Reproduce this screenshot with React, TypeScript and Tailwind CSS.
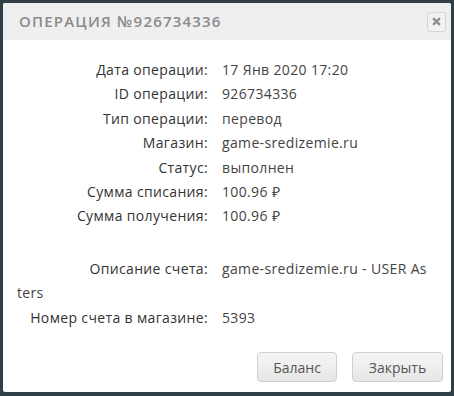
import React from "react";

const rows: [string, string][] = [
  ["Дата операции:", "17 Янв 2020 17:20"],
  ["ID операции:", "926734336"],
  ["Тип операции:", "перевод"],
  ["Магазин:", "game-sredizemie.ru"],
  ["Статус:", "выполнен"],
  ["Сумма списания:", "100.96 ₽"],
  ["Сумма получения:", "100.96 ₽"],
];

function Row({ label, value }: { label: string; value: string }) {
  return (
    <div className="leading-[24.4px] break-all tracking-[0.35px]">
      <span className="inline-block w-[191px] mr-[14px] text-right text-[#333]">{label}</span>
      <span className="text-[#444]">{value}</span>
    </div>
  );
}

export default function App() {
  return (
    <div className="w-[454px] h-[396px] bg-[#303e46] p-[3px] pb-[4px]">
      <div
        className="h-full bg-white rounded-[2px] flex flex-col overflow-hidden"
        style={{ fontFamily: '"Open Sans", "Liberation Sans", sans-serif' }}
      >
        {/* Header */}
        <div className="h-[37px] bg-[#efefef] flex items-center justify-between pl-[16px] pr-[5px]">
          <h3 className="text-[15px] font-semibold tracking-[1.2px] text-[#8a8a8a] uppercase">
            Операция №926734336
          </h3>
          <button className="w-[19px] h-[20px] rounded-[3px] border border-[#d6d6d6] bg-[#f2f2f2] flex items-center justify-center">
            <svg width="9" height="9" viewBox="0 0 10 10">
              <path d="M2 2 L8 8 M8 2 L2 8" stroke="#8c8c8c" strokeWidth="2.6" strokeLinecap="round" />
            </svg>
          </button>
        </div>

        {/* Body */}
        <div className="flex-1 pl-[14px] pr-[23px] pt-[18px] text-[14px]">
          {rows.map(([l, v]) => (
            <Row key={l} label={l} value={v} />
          ))}
          <div className="h-[28px]" />
          <Row label="Описание счета:" value="game-sredizemie.ru - USER Asters" />
          <Row label="Номер счета в магазине:" value="5393" />
        </div>

        {/* Footer */}
        <div className="flex justify-end gap-[15px] pr-[8px] pb-[10px]">
          <button className="w-[80px] h-[30px] rounded-[4px] border border-[#cfcfcf] bg-gradient-to-b from-[#f6f6f6] to-[#e6e6e6] text-[14px] text-[#555]">
            Баланс
          </button>
          <button className="w-[91px] h-[30px] rounded-[4px] border border-[#cfcfcf] bg-gradient-to-b from-[#f6f6f6] to-[#e6e6e6] text-[14px] text-[#555]">
            Закрыть
          </button>
        </div>
      </div>
    </div>
  );
}
